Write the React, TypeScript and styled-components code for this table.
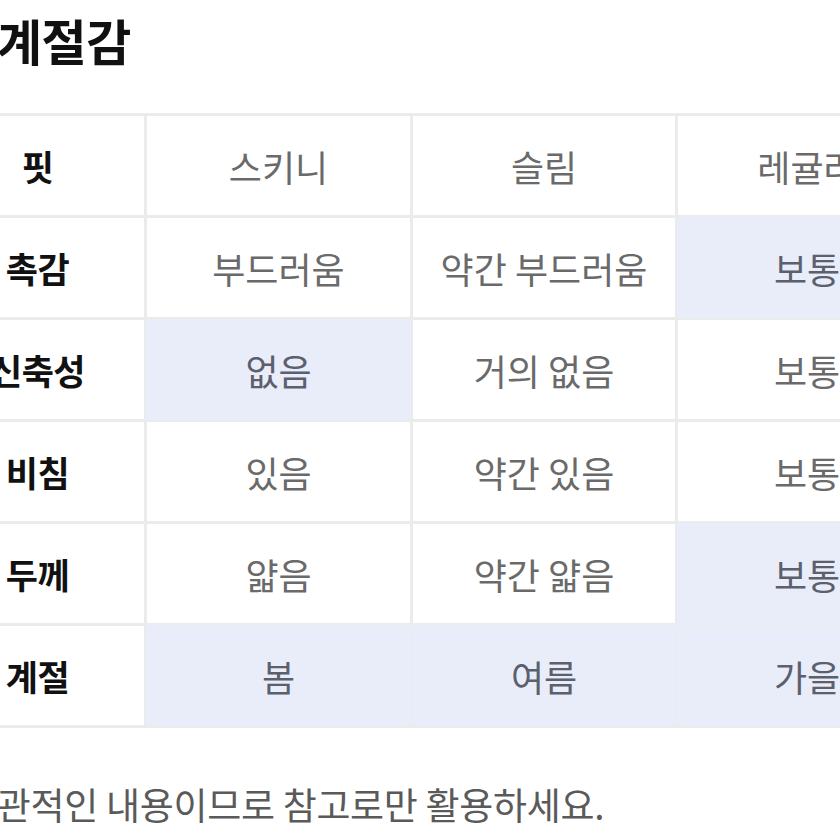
import React from "react";
import styled, { createGlobalStyle } from "styled-components";

const GlobalStyle = createGlobalStyle`
  html, body {
    margin: 0;
    padding: 0;
    background: #ffffff;
    overflow: hidden;
  }
  body {
    font-family: "Noto Sans CJK KR", "Noto Sans", sans-serif;
  }
`;

const Page = styled.div`
  width: 840px;
  height: 840px;
  display: flex;
  flex-direction: column;
  overflow: hidden;
`;

const Title = styled.h2`
  margin: 12px 0 0 -3px;
  font-size: 49px;
  line-height: 56px;
  font-weight: 700;
  color: #111111;
  letter-spacing: -0.5px;
`;

const Table = styled.div`
  margin: 45px 0 0 -72px;
  display: grid;
  grid-template-columns: 213px 263px 262px 258px;
  grid-auto-rows: 99px;
  gap: 3px;
  padding: 3px;
  width: max-content;
  background: #ebebeb;
`;

const LabelCell = styled.div`
  display: flex;
  align-items: center;
  justify-content: center;
  background: #ffffff;
  font-size: 35px;
  font-weight: 700;
  color: #111111;
  letter-spacing: -0.5px;
`;

const ValueCell = styled.div<{ $active?: boolean }>`
  display: flex;
  align-items: center;
  justify-content: center;
  background: ${(p) => (p.$active ? "#e9edfa" : "#ffffff")};
  box-shadow: ${(p) => (p.$active ? "0 0 0 1px #e9edfa" : "none")};
  font-size: 36px;
  font-weight: 400;
  color: ${(p) => (p.$active ? "#5c606c" : "#6a6a6a")};
  white-space: nowrap;
`;

const Note = styled.p`
  margin: 54px 0 0 -37px;
  font-size: 37px;
  line-height: 44px;
  color: #5a5a5a;
  letter-spacing: -0.3px;
  white-space: nowrap;
`;

type Row = {
  label: string;
  values: string[];
  active: number;
};

const rows: Row[] = [
  { label: "핏", values: ["스키니", "슬림", "레귤러"], active: -1 },
  { label: "촉감", values: ["부드러움", "약간 부드러움", "보통"], active: 2 },
  { label: "신축성", values: ["없음", "거의 없음", "보통"], active: 0 },
  { label: "비침", values: ["있음", "약간 있음", "보통"], active: -1 },
  { label: "두께", values: ["얇음", "약간 얇음", "보통"], active: 2 },
  { label: "계절", values: ["봄", "여름", "가을"], active: 99 },
];

const App: React.FC = () => {
  return (
    <>
      <GlobalStyle />
      <Page>
        <Title>계절감</Title>
        <Table>
          {rows.map((row) => (
            <React.Fragment key={row.label}>
              <LabelCell>{row.label}</LabelCell>
              {row.values.map((v, i) => (
                <ValueCell
                  key={v + i}
                  $active={row.active === 99 || row.active === i}
                >
                  {v}
                </ValueCell>
              ))}
            </React.Fragment>
          ))}
        </Table>
        <Note>주관적인 내용이므로 참고로만 활용하세요.</Note>
      </Page>
    </>
  );
};

export default App;
